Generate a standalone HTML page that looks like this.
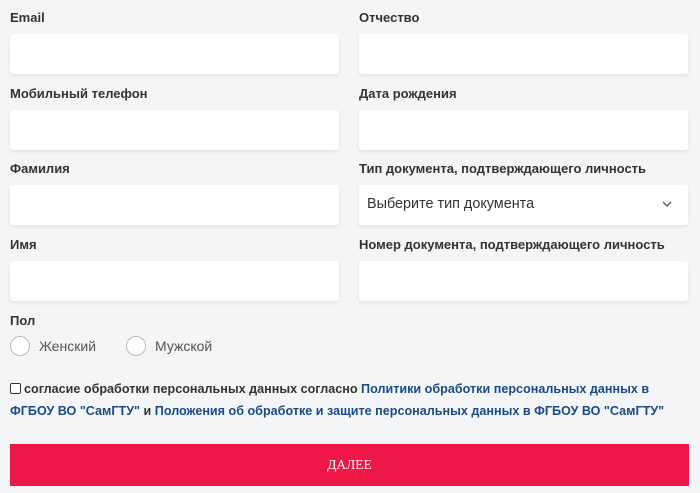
<!DOCTYPE html>
<html><head><meta charset="utf-8"><style>
*{box-sizing:border-box;margin:0;padding:0}
body{width:700px;height:493px;background:#f4f5f7;font-family:"Liberation Sans",sans-serif;color:#333;position:relative;overflow:hidden}
.l{position:absolute;font-size:13px;font-weight:bold;color:#333}
.i{position:absolute;width:329px;height:40px;background:#fff;border-radius:3px;box-shadow:0 2px 4px rgba(0,0,0,0.08)}
.r{position:absolute;width:20px;height:20px;border:1px solid #bbb;border-radius:50%;background:#fff;top:336px}
.rt{position:absolute;top:338px;font-size:14px;color:#555}
a{color:#1a4b85;text-decoration:none}
</style></head><body>
<div class="l" style="left:10px;top:10px">Email</div>
<div class="l" style="left:359px;top:10px">Отчество</div>
<div class="i" style="left:10px;top:34px"></div>
<div class="i" style="left:359px;top:34px"></div>
<div class="l" style="left:10px;top:86px">Мобильный телефон</div>
<div class="l" style="left:359px;top:86px">Дата рождения</div>
<div class="i" style="left:10px;top:110px"></div>
<div class="i" style="left:359px;top:110px"></div>
<div class="l" style="left:10px;top:161px">Фамилия</div>
<div class="l" style="left:359px;top:161px">Тип документа, подтверждающего личность</div>
<div class="i" style="left:10px;top:185px"></div>
<div class="i" style="left:359px;top:185px"><span style="position:absolute;left:8px;top:11px;font-size:14.4px;color:#333">Выберите тип документа</span>
<svg style="position:absolute;left:303px;top:16px" width="10" height="7" viewBox="0 0 10 7"><path d="M1 1l4 4 4-4" fill="none" stroke="#555" stroke-width="1.3"/></svg></div>
<div class="l" style="left:10px;top:237px">Имя</div>
<div class="l" style="left:359px;top:237px">Номер документа, подтверждающего личность</div>
<div class="i" style="left:10px;top:261px"></div>
<div class="i" style="left:359px;top:261px"></div>
<div class="l" style="left:10px;top:313px">Пол</div>
<div class="r" style="left:10px"></div><div class="rt" style="left:39px">Женский</div>
<div class="r" style="left:126px"></div><div class="rt" style="left:155px">Мужской</div>
<div style="position:absolute;left:10px;top:378px;font-size:12.6px;font-weight:bold;line-height:22px;width:685px;color:#333"><span style="display:inline-block;width:11px;height:11px;border:1px solid #333;border-radius:2px;background:#fff;vertical-align:-1px;margin-right:3px"></span>согласие обработки персональных данных согласно <a>Политики обработки персональных данных в</a><br><a>ФГБОУ ВО "СамГТУ"</a> и <a>Положения об обработке и защите персональных данных в ФГБОУ ВО "СамГТУ"</a></div>
<div style="position:absolute;left:10px;top:444px;width:679px;height:42px;background:#ee1848;color:#fff;font-family:'Liberation Serif',serif;font-size:13.5px;text-align:center;line-height:42px">ДАЛЕЕ</div>
</body></html>
